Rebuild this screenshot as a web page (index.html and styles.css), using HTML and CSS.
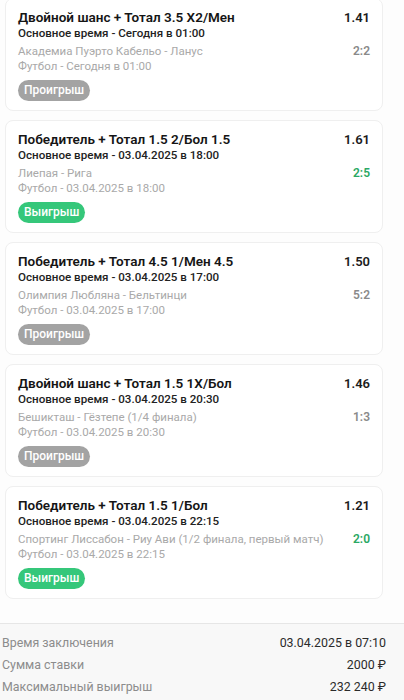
FILE: index.html
```html
<!DOCTYPE html>
<html>
<head>
    <meta charset="UTF-8">
    <title>Экспресс</title>
    <link rel="stylesheet" href="styles.css">
</head>
<body>
<div class="list">
    <div class="card first">
        <div class="row">
            <span class="title">Двойной шанс + Тотал 3.5 X2/Мен</span>
            <span class="coef">1.41</span>
        </div>
        <div class="sub">Основное время - Сегодня в 01:00</div>
        <div class="row teams">
            <span>Академиа Пуэрто Кабельо - Ланус</span>
            <span class="score">2:2</span>
        </div>
        <div class="sport">Футбол - Сегодня в 01:00</div>
        <span class="badge lose">Проигрыш</span>
    </div>

    <div class="card">
        <div class="row">
            <span class="title">Победитель + Тотал 1.5 2/Бол 1.5</span>
            <span class="coef">1.61</span>
        </div>
        <div class="sub">Основное время - 03.04.2025 в 18:00</div>
        <div class="row teams">
            <span>Лиепая - Рига</span>
            <span class="score win">2:5</span>
        </div>
        <div class="sport">Футбол - 03.04.2025 в 18:00</div>
        <span class="badge won">Выигрыш</span>
    </div>

    <div class="card">
        <div class="row">
            <span class="title">Победитель + Тотал 4.5 1/Мен 4.5</span>
            <span class="coef">1.50</span>
        </div>
        <div class="sub">Основное время - 03.04.2025 в 17:00</div>
        <div class="row teams">
            <span>Олимпия Любляна - Бельтинци</span>
            <span class="score">5:2</span>
        </div>
        <div class="sport">Футбол - 03.04.2025 в 17:00</div>
        <span class="badge lose">Проигрыш</span>
    </div>

    <div class="card">
        <div class="row">
            <span class="title">Двойной шанс + Тотал 1.5 1X/Бол</span>
            <span class="coef">1.46</span>
        </div>
        <div class="sub">Основное время - 03.04.2025 в 20:30</div>
        <div class="row teams">
            <span>Бешикташ - Гёзтепе (1/4 финала)</span>
            <span class="score">1:3</span>
        </div>
        <div class="sport">Футбол - 03.04.2025 в 20:30</div>
        <span class="badge lose">Проигрыш</span>
    </div>

    <div class="card">
        <div class="row">
            <span class="title">Победитель + Тотал 1.5 1/Бол</span>
            <span class="coef">1.21</span>
        </div>
        <div class="sub">Основное время - 03.04.2025 в 22:15</div>
        <div class="row teams">
            <span>Спортинг Лиссабон - Риу Ави (1/2 финала, первый матч)</span>
            <span class="score win">2:0</span>
        </div>
        <div class="sport">Футбол - 03.04.2025 в 22:15</div>
        <span class="badge won">Выигрыш</span>
    </div>
</div>

<div class="summary">
    <div class="line"><span>Время заключения</span><b>03.04.2025 в 07:10</b></div>
    <div class="line"><span>Сумма ставки</span><b>2000 ₽</b></div>
    <div class="line"><span>Максимальный выигрыш</span><b>232 240 ₽</b></div>
</div>
</body>
</html>
```

FILE: styles.css
```css
* {
    margin: 0;
    padding: 0;
    box-sizing: border-box;
}

body {
    width: 404px;
    height: 700px;
    overflow: hidden;
    background-color: #fdfdfd;
    font-family: Roboto, "Noto Sans", sans-serif;
    color: #1c1c1c;
}

/*список событий*/
.list {
    display: flex;
    flex-direction: column;
    gap: 9px;
    padding: 0 21px 0 5px;
}

.card {
    display: flex;
    flex-direction: column;
    align-items: flex-start;
    height: 113px;
    padding: 10px 12px 0 12px;
    background-color: #fff;
    border: 1px solid #efefef;
    border-radius: 8px;
}

/*первая карточка немного уехала вверх*/
.card.first {
    margin-top: -2px;
}

.row {
    display: flex;
    justify-content: space-between;
    width: 100%;
    white-space: nowrap;
}

.title {
    font-size: 13.5px;
    line-height: 17px;
    font-weight: 600;
    color: #151515;
}

.coef {
    font-size: 13px;
    line-height: 17px;
    font-weight: 600;
}

.sub {
    font-size: 11.6px;
    line-height: 15px;
    font-weight: 500;
    color: #222;
}

.teams {
    margin-top: 3px;
    font-size: 11.5px;
    line-height: 15px;
    color: #a9a9a9;
}

.score {
    font-size: 12px;
    font-weight: 600;
    color: #8a8a8a;
}

.score.win {
    color: #2aa864;
}

.sport {
    font-size: 11.5px;
    line-height: 15px;
    color: #a9a9a9;
}

.badge {
    margin-top: 6px;
    height: 21px;
    line-height: 21px;
    padding: 0 6px;
    border-radius: 11px;
    font-size: 12px;
    font-weight: 500;
    color: #fff;
}

.badge.lose {
    background-color: #a3a3a3;
}

.badge.won {
    background-color: #35c77a;
}

/*итоги*/
.summary {
    margin-top: 24px;
    padding: 8px 18px 0 2px;
    height: 100px;
    background-color: #f8f8f8;
    border-top: 1px solid #e6e6e6;
}

.line {
    display: flex;
    justify-content: space-between;
    font-size: 12.4px;
    line-height: 22px;
}

.line span {
    color: #8c8c8c;
}

.line b {
    font-weight: 400;
    color: #2b2b2b;
}
```
